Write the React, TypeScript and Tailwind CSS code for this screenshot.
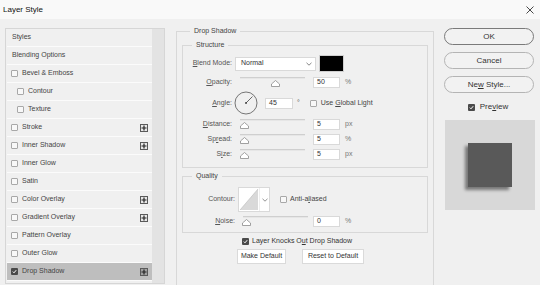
import React from 'react';

const FONT = { fontFamily: '"Liberation Sans", Arial, sans-serif' };

const EFFECTS = [
    { name: 'Styles', box: false },
    { name: 'Blending Options', box: false },
    { name: 'Bevel & Emboss', box: true },
    { name: 'Contour', box: true, indent: true },
    { name: 'Texture', box: true, indent: true },
    { name: 'Stroke', box: true, plus: true },
    { name: 'Inner Shadow', box: true, plus: true },
    { name: 'Inner Glow', box: true },
    { name: 'Satin', box: true },
    { name: 'Color Overlay', box: true, plus: true },
    { name: 'Gradient Overlay', box: true, plus: true },
    { name: 'Pattern Overlay', box: true },
    { name: 'Outer Glow', box: true },
    { name: 'Drop Shadow', box: true, plus: true, checked: true, active: true },
];

const Check = ({ checked = false }: { checked?: boolean }) =>
    checked ? (
        <span className="w-[7px] h-[7px] rounded-[1px] bg-[#4a4a4a] flex items-center justify-center shrink-0">
            <svg width="5" height="5" viewBox="0 0 5 5">
                <path d="M0.8 2.6 L2 3.8 L4.2 1.2" stroke="#fff" strokeWidth="1" fill="none" />
            </svg>
        </span>
    ) : (
        <span className="block w-[7px] h-[7px] rounded-[1px] border border-[#a8a8a8] bg-[#f8f8f8] shrink-0" />
    );

const Plus = ({ dark = false }: { dark?: boolean }) => (
    <span
        className={
            'w-[8px] h-[8px] border border-[#5a5a5a] flex items-center justify-center ' +
            (dark ? 'bg-[#a0a0a0]' : 'bg-[#e8e8e8]')
        }
    >
        <svg width="6" height="6" viewBox="0 0 6 6">
            <path d="M3 0.5 V5.5 M0.5 3 H5.5" stroke="#222" strokeWidth="1.2" />
        </svg>
    </span>
);

const Thumb = () => (
    <svg width="9" height="7" viewBox="0 0 9 7">
        <path d="M4.5 0.5 L8.5 4 V6.5 H0.5 V4 Z" fill="#fff" stroke="#8a8a8a" strokeWidth="0.8" />
    </svg>
);

const Slider = ({ pos }: { pos: number }) => (
    <div className="w-[72px] h-full flex flex-col pl-[5px]">
        <div className="w-[65px] h-[2px] bg-[#cfcfcf] border-b border-[#e6e6e6] mt-[1px]" />
        <div style={{ marginLeft: pos }} className="mt-[1px] flex">
            <Thumb />
        </div>
    </div>
);

const Field = ({ value, w = 'w-[27px]' }: { value: string; w?: string }) => (
    <span
        className={
            w + ' h-[11px] bg-white border border-[#d9d9d9] flex items-center pl-[3px] text-[7px] text-[#333]'
        }
    >
        {value}
    </span>
);

const Label = ({ children, w = 'w-[52px]' }: { children: React.ReactNode; w?: string }) => (
    <span className={w + ' text-right text-[7px] text-[#555] pr-[3px] shrink-0'}>{children}</span>
);

const SliderRow = ({
    label,
    value,
    unit,
    pos,
}: {
    label: React.ReactNode;
    value: string;
    unit: string;
    pos: number;
}) => (
    <div className="flex h-[12px]">
        <div className="flex items-end pb-[1px]">
            <Label>{label}</Label>
        </div>
        <Slider pos={pos} />
        <div className="flex items-center gap-[5px] ml-[6px]">
            <Field value={value} />
            <span className="text-[7px] text-[#777]">{unit}</span>
        </div>
    </div>
);

const Btn = ({ children, dark = false }: { children: React.ReactNode; dark?: boolean }) => (
    <button
        className={
            'w-[90px] h-[17px] rounded-full border bg-[#f2f2f2] text-[8px] text-[#333] flex items-center justify-center ' +
            (dark ? 'border-[#7a7a7a]' : 'border-[#b4b4b4]')
        }
    >
        <span>{children}</span>
    </button>
);

const SmallBtn = ({ children, w }: { children: React.ReactNode; w: string }) => (
    <button
        className={
            w + ' h-[15px] bg-white border border-[#dadada] text-[7px] text-[#333] flex items-center justify-center'
        }
    >
        {children}
    </button>
);

export default function App() {
    return (
        <div style={FONT} className="w-[540px] h-[285px] bg-[#f0f0f0] overflow-hidden flex flex-col">
            {/* title bar */}
            <div className="h-[19px] bg-[#f9f9f9] flex items-center justify-between pl-[3px] pr-[6px] shrink-0">
                <span className="text-[8px] text-[#111]">Layer Style</span>
                <svg width="8" height="8" viewBox="0 0 8 8">
                    <path d="M0.5 0.5 L7.5 7.5 M7.5 0.5 L0.5 7.5" stroke="#333" strokeWidth="0.9" />
                </svg>
            </div>

            <div className="flex flex-1 pt-[9px]">
                {/* effects list */}
                <div className="ml-[5px] w-[160px] h-[256px] border border-[#d6d6d6] flex shrink-0">
                    <div className="w-[146px] flex flex-col pl-[1px]">
                        {EFFECTS.map(e => (
                            <div
                                key={e.name}
                                className={
                                    'h-[18px] flex items-center border-b border-[#fbfbfb] pr-[4px] ' +
                                    (e.active ? 'bg-[#bebebe]' : 'bg-[#f0f0f0]') +
                                    (e.indent ? ' pl-[10px]' : ' pl-[4px]')
                                }
                            >
                                {e.box && <Check checked={e.checked} />}
                                <span className={'text-[7px] text-[#444] ' + (e.box ? 'ml-[4px]' : 'ml-[1px]')}>
                                    {e.name}
                                </span>
                                <span className="flex-1" />
                                {e.plus && <Plus dark={e.active} />}
                            </div>
                        ))}
                    </div>
                    <div className="flex-1 bg-[#e3e3e3]" />
                </div>

                {/* drop shadow settings */}
                <fieldset className="ml-[11px] -mt-[2px] w-[258px] h-[300px] border border-[#d8d8d8] px-[5px]">
                    <legend className="ml-[8px] px-[4px] text-[7px] text-[#444] leading-[10px]">Drop Shadow</legend>

                    <fieldset className="mt-[4px] h-[128px] border border-[#d8d8d8] pr-[2px]">
                        <legend className="ml-[9px] px-[4px] text-[7px] text-[#444] leading-[10px]">Structure</legend>

                        <div className="flex items-center h-[17px] mt-[5px]">
                            <Label>
                                <u>B</u>lend Mode:
                            </Label>
                            <span className="w-[81px] h-[14px] bg-white border border-[#d9d9d9] flex items-center justify-between pl-[5px] pr-[3px] text-[7px] text-[#333]">
                                Normal
                                <svg width="6" height="4" viewBox="0 0 6 4">
                                    <path d="M0.5 0.8 L3 3.2 L5.5 0.8" stroke="#666" strokeWidth="0.8" fill="none" />
                                </svg>
                            </span>
                            <span className="ml-[3px] w-[25px] h-[17px] bg-black border border-[#cfcfcf]" />
                        </div>

                        <div className="mt-[4px]">
                            <SliderRow
                                label={
                                    <>
                                        <u>O</u>pacity:
                                    </>
                                }
                                value="50"
                                unit="%"
                                pos={31}
                            />
                        </div>

                        <div className="flex items-center h-[26px] mt-[2px]">
                            <Label>
                                <u>A</u>ngle:
                            </Label>
                            <svg width="24" height="24" viewBox="0 0 24 24" className="ml-[-1px]">
                                <circle cx="12" cy="12" r="11" fill="none" stroke="#555" strokeWidth="0.8" />
                                <path d="M12 12 L18.5 5.5" stroke="#444" strokeWidth="0.8" />
                                <circle cx="12" cy="12" r="0.9" fill="#333" />
                            </svg>
                            <span className="ml-[7px] flex">
                                <Field value="45" w="w-[28px]" />
                            </span>
                            <span className="ml-[4px] text-[7px] text-[#555]">°</span>
                            <span className="ml-[10px] flex">
                                <Check />
                            </span>
                            <span className="ml-[4px] text-[7px] text-[#444] whitespace-nowrap">
                                Use <u>G</u>lobal Light
                            </span>
                        </div>

                        <div className="mt-[2px] flex flex-col gap-[3px]">
                            <SliderRow
                                label={
                                    <>
                                        <u>D</u>istance:
                                    </>
                                }
                                value="5"
                                unit="px"
                                pos={0}
                            />
                            <SliderRow
                                label={
                                    <>
                                        Sp<u>r</u>ead:
                                    </>
                                }
                                value="5"
                                unit="%"
                                pos={0}
                            />
                            <SliderRow
                                label={
                                    <>
                                        S<u>i</u>ze:
                                    </>
                                }
                                value="5"
                                unit="px"
                                pos={0}
                            />
                        </div>
                    </fieldset>

                    <fieldset className="mt-[3px] border border-[#d8d8d8] pb-[5px]">
                        <legend className="ml-[9px] px-[4px] text-[7px] text-[#444] leading-[10px]">Quality</legend>

                        <div className="flex items-center mt-[6px]">
                            <Label w="w-[55px]">Contour:</Label>
                            <span className="w-[32px] h-[25px] bg-white border border-[#d9d9d9] flex">
                                <svg width="20" height="23" viewBox="0 0 20 23">
                                    <path d="M1 22 L19 1 V22 Z" fill="#d9d9d9" />
                                    <path d="M1 22 L19 1" stroke="#bbb" strokeWidth="0.6" />
                                </svg>
                                <span className="flex-1 flex items-center justify-center border-l border-[#eee]">
                                    <svg width="6" height="4" viewBox="0 0 6 4">
                                        <path d="M0.5 0.8 L3 3.2 L5.5 0.8" stroke="#777" strokeWidth="0.8" fill="none" />
                                    </svg>
                                </span>
                            </span>
                            <span className="ml-[10px] flex">
                                <Check />
                            </span>
                            <span className="ml-[3px] text-[7px] text-[#444]">
                                Anti-a<u>l</u>iased
                            </span>
                        </div>

                        <div className="mt-[3px] flex h-[12px]">
                            <div className="flex items-end pb-[1px]">
                                <Label w="w-[55px]">
                                    <u>N</u>oise:
                                </Label>
                            </div>
                            <Slider pos={-1} />
                            <div className="flex items-center gap-[5px] ml-[3px]">
                                <Field value="0" />
                                <span className="text-[7px] text-[#777]">%</span>
                            </div>
                        </div>
                    </fieldset>

                    <div className="flex items-center mt-[3px] ml-[60px]">
                        <Check checked />
                        <span className="ml-[3px] text-[7px] text-[#333]">
                            Layer Knocks O<u>u</u>t Drop Shadow
                        </span>
                    </div>

                    <div className="flex gap-[16px] mt-[2px] ml-[55px]">
                        <SmallBtn w="w-[49px]">Make Default</SmallBtn>
                        <SmallBtn w="w-[62px]">Reset to Default</SmallBtn>
                    </div>
                </fieldset>

                {/* right column */}
                <div className="ml-[10px] w-[91px] flex flex-col">
                    <div className="flex flex-col gap-[7px]">
                        <Btn dark>OK</Btn>
                        <Btn>Cancel</Btn>
                        <Btn>
                            Ne<u>w</u> Style...
                        </Btn>
                    </div>
                    <div className="flex items-center justify-center gap-[5px] mt-[8px] pr-[3px]">
                        <Check checked />
                        <span className="text-[8px] text-[#333]">
                            Pre<u>v</u>iew
                        </span>
                    </div>
                    <div className="mt-[7px] ml-[1px] w-[90px] h-[90px] bg-[#d8d8d8] flex items-center justify-center">
                        <div className="w-[44px] h-[44px] bg-[#595959] shadow-[-3px_3px_3px_rgba(0,0,0,0.45)]" />
                    </div>
                </div>
            </div>
        </div>
    );
}
